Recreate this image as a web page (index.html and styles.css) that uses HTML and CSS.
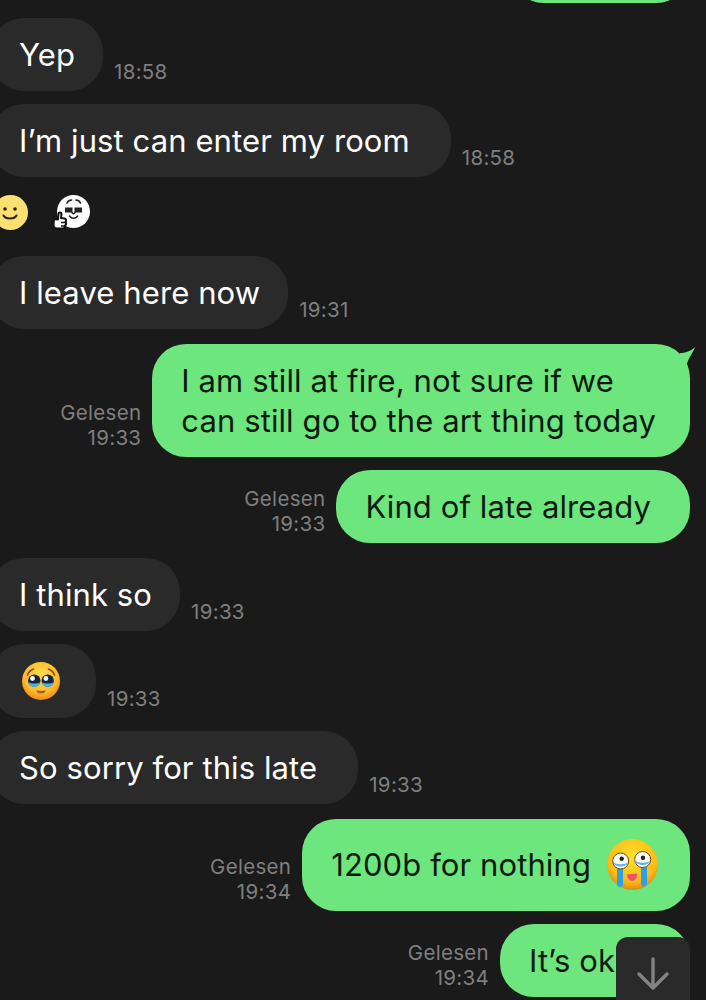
FILE: index.html
```html
<!doctype html>
<html lang="en">
 <head>
  <title>Chat</title>
  <link rel="stylesheet" href="styles.css">
 </head>
 <body>
 <div id="chat">
   <div class="row mine"><div class="bubble stub"></div></div>

   <div class="row turn"><div class="bubble">Yep</div><div class="meta">18:58</div></div>
   <div class="row"><div class="bubble wide">I’m just can enter my room</div><div class="meta">18:58</div></div>

   <div class="stickers">
     <svg class="smile" width="35" height="35" viewBox="0 0 35 35">
       <circle cx="17.5" cy="17.5" r="17.5" fill="#fbe072"/>
       <circle cx="12" cy="14" r="1.8" fill="#2a2410"/>
       <circle cx="22" cy="14" r="1.8" fill="#2a2410"/>
       <path d="M10.5 20.5c2 4 11 4 13 0" fill="none" stroke="#2a2410" stroke-width="2" stroke-linecap="round"/>
     </svg>
     <svg class="thumb" width="39" height="38" viewBox="0 0 39 38">
       <circle cx="21.500" cy="16.500" r="16.500" fill="#fff"/>
       <path d="M15 8c1-2 3-3 4.500-3M24 5c1.500 0 3.500 1 4.500 3" fill="none" stroke="#222" stroke-width="1.600" stroke-linecap="round"/>
       <rect x="13" y="12.500" width="7.500" height="5" fill="#222"/>
       <rect x="22.500" y="12.500" width="7.500" height="5" fill="#222"/>
       <path d="M20 17.500c.5 1.500 2.500 1.500 3 0M17.500 21c2 3 6 3 8 0" fill="none" stroke="#222" stroke-width="1.500" stroke-linecap="round"/>
       <path d="M2 24l4 .5.500-6c.2-1.500 3-1.500 3 .5l-.5 4 3.500.5c1.800.3 2 2.500 1 3.500 1 1 .8 3-.5 3.500.4 1.800-.6 3-2 3H5c-2 0-3.500-1-3.500-3z" fill="#fff" stroke="#111" stroke-width="2" stroke-linejoin="round"/>
       <path d="M9 27.500h5M9 31h4.500" fill="none" stroke="#111" stroke-width="1.500"/>
     </svg>
   </div>

   <div class="row"><div class="bubble">I leave here now</div><div class="meta">19:31</div></div>

   <div class="row mine turn">
     <div class="meta">Gelesen<br>19:33</div>
     <div class="bubble two-line">I am still at fire, not sure if we<br>can still go to the art thing today
       <svg class="tail" width="24" height="26" viewBox="0 0 24 26"><path d="M8 10C13 10 19 8 23 4 21.500 9 17 14 14.500 22L5 20z" fill="#6ee67e"/></svg>
     </div>
   </div>
   <div class="row mine"><div class="meta">Gelesen<br>19:33</div><div class="bubble wide">Kind of late already</div></div>

   <div class="row turn"><div class="bubble">I think so</div><div class="meta">19:33</div></div>
   <div class="row">
     <div class="bubble emoji-only">
       <svg width="38" height="38" viewBox="0 0 38 38">
         <defs>
           <radialGradient id="faceA" cx="50%" cy="35%" r="65%"><stop offset="0" stop-color="#ffdf4a"/><stop offset=".7" stop-color="#fdb92e"/><stop offset="1" stop-color="#ef8a1c"/></radialGradient>
         </defs>
         <circle cx="19" cy="19" r="19" fill="url(#faceA)"/>
         <path d="M5.500 13c1-3 3.500-5 6-6M32.500 13c-1-3-3.500-5-6-6" fill="none" stroke="#8a4a10" stroke-width="1.600" stroke-linecap="round"/>
         <circle cx="12.300" cy="18.700" r="6.200" fill="#1a2440"/>
         <circle cx="25.700" cy="18.700" r="6.200" fill="#1a2440"/>
         <path d="M6.500 20c1.500 6.500 10 6.500 11.600 0-2 2-9.500 2-11.600 0zM19.900 20c1.500 6.500 10 6.500 11.600 0-2 2-9.500 2-11.600 0z" fill="#3fb8f2"/>
         <circle cx="10.500" cy="16.500" r="2.400" fill="#fff"/>
         <circle cx="23.900" cy="16.500" r="2.400" fill="#fff"/>
         <path d="M14 28c2 1.200 8 1.200 10 0-.5 2.500-2.500 3.500-5 3.500S14.500 30.500 14 28z" fill="#a8601a"/>
       </svg>
     </div>
     <div class="meta">19:33</div>
   </div>
   <div class="row"><div class="bubble wide">So sorry for this late</div><div class="meta">19:33</div></div>

   <div class="row mine turn">
     <div class="meta">Gelesen<br>19:34</div>
     <div class="bubble with-emoji">
       1200b for nothing
       <svg width="51" height="51" viewBox="0 0 51 51">
         <defs>
           <radialGradient id="faceB" cx="50%" cy="35%" r="65%"><stop offset="0" stop-color="#ffe02e"/><stop offset=".75" stop-color="#fbbb14"/><stop offset="1" stop-color="#d98a18"/></radialGradient>
         </defs>
         <circle cx="25.500" cy="25.500" r="25.500" fill="url(#faceB)"/>
         <path d="M10 25h6v21l-3 2.500-3-2zM34 24h6v21l-3 3-3-2.500z" fill="#2f9fe4"/>
         <circle cx="13.700" cy="22" r="8" fill="#fff" stroke="#6b4a10" stroke-width="1"/>
         <circle cx="35.700" cy="20.500" r="8" fill="#fff" stroke="#6b4a10" stroke-width="1"/>
         <path d="M6.500 23c2 3 12.500 3 14.500 0-.5 6-14 6-14.500 0zM28.500 21.500c2 3 12.500 3 14.500 0-.5 6-14 6-14.500 0z" fill="#5cb8f0"/>
         <circle cx="14.700" cy="19.700" r="2.200" fill="#222"/>
         <circle cx="36" cy="18.700" r="2.200" fill="#222"/>
         <path d="M20 35.500l10-1c.3 4-1.500 7.500-4.800 7.500-3 0-5-3-5.200-6.500z" fill="#f0506e"/>
       </svg>
     </div>
   </div>
   <div class="row mine"><div class="meta">Gelesen<br>19:34</div><div class="bubble last">It’s ok</div></div>
 </div>

 <div id="scroll-down">
   <svg width="34" height="34" viewBox="0 0 34 34"><path d="M17 2v29M3 17l14 14 14-14" fill="none" stroke="#838383" stroke-width="3.400" stroke-linecap="round" stroke-linejoin="round"/></svg>
 </div>
 </body>
</html>
```

FILE: styles.css
```css
html, body {
  margin: 0;
  height: 1000px;
  overflow: hidden;
  background-color: #1a1a1a;
}

body {
  position: relative;
  font-family: Inter, "Noto Sans", sans-serif;
}

#chat {
  display: flex;
  flex-direction: column;
  gap: 13px;
  margin-top: -70.25px;
  padding: 0 16px 0 0;
}

.row {
  display: flex;
  align-items: flex-end;
  gap: 11px;
  margin-left: -10px;
}

.row.mine {
  justify-content: flex-end;
}

.turn {
  margin-top: 1.5px;
}

.bubble {
  position: relative;
  padding: 17.25px 28px 16px 29px;
  border-radius: 34px;
  background-color: #2a2a2a;
  color: #fff;
  font-size: 31px;
  line-height: 40px;
  letter-spacing: 0.1px;
  white-space: nowrap;
}

.mine .bubble {
  background-color: #6ee67e;
  color: #0c1a0e;
}

.bubble.wide {
  padding-right: 41px;
}

.mine .bubble.wide {
  padding-right: 39px;
}

.bubble.two-line {
  padding-right: 34px;
}

.stub {
  box-sizing: border-box;
  width: 180px;
  height: 73.25px;
}

.meta {
  padding-bottom: 7px;
  color: #7f7f7f;
  font-size: 20.5px;
  line-height: 25px;
  letter-spacing: 0.3px;
  text-align: right;
}

.stickers {
  display: flex;
  gap: 24px;
  height: 35px;
  margin: 5px 0 13px -7px;
}

.stickers svg {
  flex: none;
  overflow: visible;
}

.bubble.emoji-only {
  display: flex;
  padding: 18px 36px 18px 32px;
}

.mine .bubble.with-emoji {
  display: flex;
  align-items: center;
  gap: 16px;
  padding: 20.5px 32px 20.5px 29px;
}

.bubble.last {
  width: 131px;
  padding-right: 30px;
}

.tail {
  position: absolute;
  top: -1px;
  right: -6px;
}

#scroll-down {
  position: absolute;
  top: 937px;
  left: 616px;
  display: flex;
  justify-content: center;
  width: 74px;
  height: 63px;
  padding-top: 20px;
  box-sizing: border-box;
  border-radius: 12px 12px 0 0;
  background-color: #2a2a2a;
}
```
